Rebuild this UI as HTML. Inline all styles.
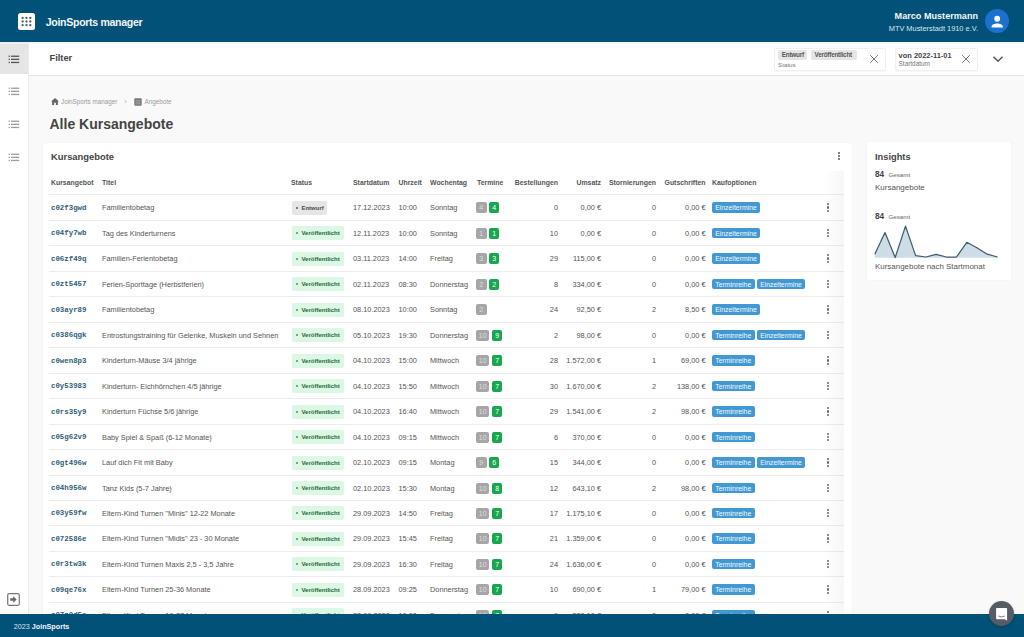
<!DOCTYPE html>
<html lang="de">
<head>
<meta charset="utf-8">
<title>JoinSports manager</title>
<style>
*{box-sizing:border-box;margin:0;padding:0}
html,body{width:1024px;height:637px;overflow:hidden}
body{position:relative;background:#f9f9f9;font-family:"Liberation Sans",sans-serif;color:#555}
.a{position:absolute;white-space:nowrap;line-height:1}
#hdr{position:absolute;left:0;top:0;width:1024px;height:42px;background:#015179}
#logo{position:absolute;left:18px;top:12.5px;width:17px;height:17.5px;background:#fff;border-radius:2.5px}
#logo i{position:absolute;width:2.2px;height:2.2px;border-radius:50%;background:#4a5a66}
#avatar{position:absolute;left:985.2px;top:8.8px;width:24.2px;height:24.2px;border-radius:50%;background:#1b71cd}
#side{position:absolute;left:0;top:42px;width:29px;height:572px;background:#fff;border-right:1px solid #ececec}
#side .act{position:absolute;left:0;top:1.5px;width:28px;height:30.5px;background:#e5e5e5}
#filter{position:absolute;left:29px;top:42px;width:995px;height:34px;background:#fff;box-shadow:inset 0 1.5px 0 #f2f7fa;border-bottom:1px solid #e4e4e4}
.fbox{position:absolute;top:6px;border:1px solid #f0f0f0;border-radius:2px;background:#fff;box-shadow:0 1px 1px rgba(0,0,0,.03)}
.chip{position:absolute;height:10.8px;background:#e6e6e6;border-radius:2px}
#card{position:absolute;left:43px;top:143px;width:809px;height:500px;background:#fff;border-radius:2px;box-shadow:0 0 2px rgba(0,0,0,.06)}
#tbl{position:absolute;left:0;top:0;width:801px;height:500px;overflow:hidden}
.row{position:absolute;left:6px;width:795px;border-bottom:1px solid #ececec}
.row .c,.row .st,.row .tb,.row .kb,.row .keb{position:absolute;top:0;bottom:0;margin:auto 0;white-space:nowrap}
.row>span{}
.c{font-size:7.35px;line-height:25px;height:25px;color:#555}
.row .c{left:auto}
.c.code{font-family:"Liberation Mono",monospace;font-weight:700;font-size:7.4px;color:#2e5d77}
.st{height:14px;line-height:14.2px;font-size:6px;font-weight:700;border-radius:2px;padding-left:9.4px}
.st i{position:absolute;left:3.6px;top:6px;width:2.2px;height:2.2px;border-radius:50%}
.st.ent{width:35.4px;background:#e6e6e6;color:#4a4a4a}
.st.ent i{background:#555}
.st.pub{width:51.8px;background:#dcf7e3;color:#1c6b3a}
.st.pub i{background:#2aa65a}
.tb{height:11px;line-height:11px;font-size:7px;text-align:center;border-radius:2px;color:#fff}
.tb.gray{background:#a6a6a6;color:#dedede}
.tb.green{width:10px;background:#17a74e}
.kb{height:10.5px;line-height:11.3px;font-size:6.9px;text-align:center;border-radius:2px;background:#4198d2;color:#f4f9fc}
.keb{width:2.2px;height:8.8px}
.keb i{position:absolute;left:0;width:2.2px;height:2.2px;background:#6a6a6a;border-radius:50%}
.keb i:nth-child(1){top:0}.keb i:nth-child(2){top:3.3px}.keb i:nth-child(3){top:6.6px}
.th{position:absolute;top:36.8px;font-size:6.9px;font-weight:700;color:#555;line-height:1;white-space:nowrap}
#shade{position:absolute;left:781px;top:28px;width:20px;height:480px;background:linear-gradient(to right,rgba(0,0,0,0),rgba(0,0,0,.035))}
#ins{position:absolute;left:867px;top:142px;width:144px;height:138px;background:#fff;border-radius:2px;box-shadow:0 0 2px rgba(0,0,0,.06)}
#foot{position:absolute;left:0;top:614px;width:1024px;height:23px;background:#015179}
#chat{position:absolute;left:989px;top:601px;width:25px;height:25px;border-radius:50%;background:#565c63;box-shadow:0 1px 3px rgba(0,0,0,.2)}
</style>
</head>
<body>
<div id="hdr">
  <div id="logo"><svg width="17" height="17.5" viewBox="0 0 17 17.5" style="position:absolute;left:0;top:0"><circle cx="4.6" cy="4.9" r="1.15" fill="#4d5b66"/><circle cx="8.5" cy="4.9" r="1.15" fill="#4d5b66"/><circle cx="12.3" cy="4.9" r="1.15" fill="#4d5b66"/><circle cx="4.6" cy="8.5" r="1.15" fill="#4d5b66"/><circle cx="8.5" cy="8.5" r="1.15" fill="#4d5b66"/><circle cx="12.3" cy="8.5" r="1.15" fill="#4d5b66"/><circle cx="4.6" cy="12.2" r="1.15" fill="#4d5b66"/><circle cx="8.5" cy="12.2" r="1.15" fill="#4d5b66"/><circle cx="12.3" cy="12.2" r="1.15" fill="#4d5b66"/></svg></div>
  <div class="a" style="left:45.8px;top:16.7px;font-size:10.6px;letter-spacing:-0.33px;font-weight:700;color:#f2f6f8">JoinSports manager</div>
  <div class="a" style="right:46px;top:11.6px;font-size:9.1px;font-weight:700;color:#f2f6f8">Marco Mustermann</div>
  <div class="a" style="right:46px;top:24.9px;font-size:7.4px;color:#dce6ec">MTV Musterstadt 1910 e.V.</div>
  <div id="avatar">
    <svg width="24.2" height="24.2" viewBox="0 0 24.2 24.2" style="position:absolute;left:0;top:0"><circle cx="12.2" cy="9.7" r="2.95" fill="#fff"/><path d="M6.6 17.6c0-1.9 2.9-3.1 5.6-3.1s5.6 1.2 5.6 3.1v0.8H6.6z" fill="#fff"/></svg>
  </div>
</div>

<div id="side">
  <div style="position:absolute;left:0;top:0;width:29px;height:1.5px;background:#eaf1f6"></div>
  <div class="act"></div>
  <svg width="12" height="9" viewBox="0 0 12 9" style="position:absolute;left:8px;top:12.5px"><rect x="0.6" y="0.6" width="1.3" height="1.3" fill="#555"/><rect x="3" y="0.6" width="8.2" height="1.3" fill="#555"/><rect x="0.6" y="3.6999999999999997" width="1.3" height="1.3" fill="#555"/><rect x="3" y="3.6999999999999997" width="8.2" height="1.3" fill="#555"/><rect x="0.6" y="6.800000000000001" width="1.3" height="1.3" fill="#555"/><rect x="3" y="6.800000000000001" width="8.2" height="1.3" fill="#555"/></svg><svg width="12" height="9" viewBox="0 0 12 9" style="position:absolute;left:8px;top:44.8px"><rect x="0.6" y="0.6" width="1.3" height="1.3" fill="#9d9d9d"/><rect x="3" y="0.6" width="8.2" height="1.3" fill="#9d9d9d"/><rect x="0.6" y="3.6999999999999997" width="1.3" height="1.3" fill="#9d9d9d"/><rect x="3" y="3.6999999999999997" width="8.2" height="1.3" fill="#9d9d9d"/><rect x="0.6" y="6.800000000000001" width="1.3" height="1.3" fill="#9d9d9d"/><rect x="3" y="6.800000000000001" width="8.2" height="1.3" fill="#9d9d9d"/></svg><svg width="12" height="9" viewBox="0 0 12 9" style="position:absolute;left:8px;top:77.8px"><rect x="0.6" y="0.6" width="1.3" height="1.3" fill="#9d9d9d"/><rect x="3" y="0.6" width="8.2" height="1.3" fill="#9d9d9d"/><rect x="0.6" y="3.6999999999999997" width="1.3" height="1.3" fill="#9d9d9d"/><rect x="3" y="3.6999999999999997" width="8.2" height="1.3" fill="#9d9d9d"/><rect x="0.6" y="6.800000000000001" width="1.3" height="1.3" fill="#9d9d9d"/><rect x="3" y="6.800000000000001" width="8.2" height="1.3" fill="#9d9d9d"/></svg><svg width="12" height="9" viewBox="0 0 12 9" style="position:absolute;left:8px;top:110.8px"><rect x="0.6" y="0.6" width="1.3" height="1.3" fill="#9d9d9d"/><rect x="3" y="0.6" width="8.2" height="1.3" fill="#9d9d9d"/><rect x="0.6" y="3.6999999999999997" width="1.3" height="1.3" fill="#9d9d9d"/><rect x="3" y="3.6999999999999997" width="8.2" height="1.3" fill="#9d9d9d"/><rect x="0.6" y="6.800000000000001" width="1.3" height="1.3" fill="#9d9d9d"/><rect x="3" y="6.800000000000001" width="8.2" height="1.3" fill="#9d9d9d"/></svg>
</div>

<div id="filter">
  <div class="a" style="left:20.5px;top:11.9px;font-size:9.3px;font-weight:700;color:#444">Filter</div>
  <div class="fbox" style="left:745px;width:111.5px;height:22.5px">
    <div class="chip" style="left:3.1px;top:0.5px;width:29.4px"></div>
    <div class="chip" style="left:35.7px;top:0.5px;width:46.7px"></div>
    <div class="a" style="left:6.8px;top:2.9px;font-size:6.3px;letter-spacing:-0.2px;font-weight:700;color:#555">Entwurf</div>
    <div class="a" style="left:39.5px;top:2.9px;font-size:6.3px;letter-spacing:-0.2px;font-weight:700;color:#555">Veröffentlicht</div>
    <div class="a" style="left:3.1px;top:12.5px;font-size:6.2px;color:#777">Status</div>
    <svg width="10" height="10" viewBox="0 0 10 10" style="position:absolute;left:93.5px;top:5px"><path d="M1.2 1.2L8.8 8.8M8.8 1.2L1.2 8.8" stroke="#777" stroke-width="1"/></svg>
  </div>
  <div class="fbox" style="left:865.5px;width:83.5px;height:22.5px">
    <div class="a" style="left:3.1px;top:2.7px;font-size:7.45px;font-weight:700;color:#444">von 2022-11-01</div>
    <div class="a" style="left:3.1px;top:11.9px;font-size:6.4px;color:#777">Startdatum</div>
    <svg width="10" height="10" viewBox="0 0 10 10" style="position:absolute;left:65.7px;top:4.7px"><path d="M1.2 1.2L8.8 8.8M8.8 1.2L1.2 8.8" stroke="#777" stroke-width="1"/></svg>
  </div>
  <svg width="12" height="8" viewBox="0 0 12 8" style="position:absolute;left:963px;top:13px"><path d="M1.5 1.8L6 6.2L10.5 1.8" stroke="#555" stroke-width="1.5" fill="none"/></svg>
</div>

<!-- breadcrumb -->
<svg width="8" height="7" viewBox="0 0 8 7" style="position:absolute;left:50.5px;top:98px"><path d="M4 0L8 3.6H6.9V7H4.9V4.8H3.1V7H1.1V3.6H0z" fill="#666"/></svg>
<div class="a" style="left:61px;top:99px;font-size:6.3px;color:#9a9a9a">JoinSports manager</div>
<div class="a" style="left:124.5px;top:99px;font-size:6.3px;color:#aaa">›</div>
<svg width="8" height="8" viewBox="0 0 8 8" style="position:absolute;left:133.8px;top:97.8px"><rect x="0.3" y="0.3" width="7.4" height="7.4" rx="1" fill="#777"/><path d="M1.5 2.6H6.5M1.5 4.2H6.5M1.5 5.8H6.5" stroke="#bbb" stroke-width="0.6"/></svg>
<div class="a" style="left:144.6px;top:99px;font-size:6.3px;color:#9a9a9a">Angebote</div>
<div class="a" style="left:49.5px;top:116.9px;font-size:14px;font-weight:700;color:#444">Alle Kursangebote</div>

<div id="card">
  <div id="tbl">
    <div class="a" style="left:8px;top:9px;font-size:9.4px;font-weight:700;color:#444">Kursangebote</div>
    <div style="position:absolute;left:794.6px;top:8.7px;width:2.3px;height:8.2px"><i style="position:absolute;left:0;top:0;width:2.3px;height:2.3px;border-radius:50%;background:#555"></i><i style="position:absolute;left:0;top:2.95px;width:2.3px;height:2.3px;border-radius:50%;background:#555"></i><i style="position:absolute;left:0;top:5.9px;width:2.3px;height:2.3px;border-radius:50%;background:#555"></i></div>
    <div class="th" style="left:8px">Kursangebot</div>
    <div class="th" style="left:59px">Titel</div>
    <div class="th" style="left:248px">Status</div>
    <div class="th" style="left:310px">Startdatum</div>
    <div class="th" style="left:355.5px">Uhrzeit</div>
    <div class="th" style="left:387px">Wochentag</div>
    <div class="th" style="left:434px">Termine</div>
    <div class="th" style="right:286px">Bestellungen</div>
    <div class="th" style="right:243px">Umsatz</div>
    <div class="th" style="right:188px">Stornierungen</div>
    <div class="th" style="right:138.5px">Gutschriften</div>
    <div class="th" style="left:669px">Kaufoptionen</div>
    <div class="row" style="top:0;height:52px"></div>
<div class="row" style="top:52px;height:26px"><span class="c code" style="left:2px;top:1.6px">c02f3gwd</span><span class="c" style="left:53px">Familientobetag</span><span class="st ent" style="left:243px"><i></i>Entwurf</span><span class="c" style="left:304px">17.12.2023</span><span class="c" style="left:349.5px">10:00</span><span class="c" style="left:381px">Sonntag</span><span class="tb gray" style="left:427px;width:10.5px">4</span><span class="tb green" style="left:440.3px">4</span><span class="c r" style="right:286px">0</span><span class="c r" style="right:243px">0,00 €</span><span class="c r" style="right:188px">0</span><span class="c r" style="right:138.5px">0,00 €</span><span class="kb" style="left:663px;width:48px">Einzeltermine</span><span class="keb" style="left:778px"><i></i><i></i><i></i></span></div>
<div class="row" style="top:78px;height:25px"><span class="c code" style="left:2px;top:1.6px">c04fy7wb</span><span class="c" style="left:53px">Tag des Kinderturnens</span><span class="st pub" style="left:243px"><i></i>Veröffentlicht</span><span class="c" style="left:304px">12.11.2023</span><span class="c" style="left:349.5px">10:00</span><span class="c" style="left:381px">Sonntag</span><span class="tb gray" style="left:427px;width:10.5px">1</span><span class="tb green" style="left:440.3px">1</span><span class="c r" style="right:286px">10</span><span class="c r" style="right:243px">0,00 €</span><span class="c r" style="right:188px">0</span><span class="c r" style="right:138.5px">0,00 €</span><span class="kb" style="left:663px;width:48px">Einzeltermine</span><span class="keb" style="left:778px"><i></i><i></i><i></i></span></div>
<div class="row" style="top:103px;height:26px"><span class="c code" style="left:2px;top:1.6px">c06zf49q</span><span class="c" style="left:53px">Familien-Ferientobetag</span><span class="st pub" style="left:243px"><i></i>Veröffentlicht</span><span class="c" style="left:304px">03.11.2023</span><span class="c" style="left:349.5px">14:00</span><span class="c" style="left:381px">Freitag</span><span class="tb gray" style="left:427px;width:10.5px">3</span><span class="tb green" style="left:440.3px">3</span><span class="c r" style="right:286px">29</span><span class="c r" style="right:243px">115,00 €</span><span class="c r" style="right:188px">0</span><span class="c r" style="right:138.5px">0,00 €</span><span class="kb" style="left:663px;width:48px">Einzeltermine</span><span class="keb" style="left:778px"><i></i><i></i><i></i></span></div>
<div class="row" style="top:129px;height:25px"><span class="c code" style="left:2px;top:1.6px">c0zt5457</span><span class="c" style="left:53px">Ferien-Sporttage (Herbstferien)</span><span class="st pub" style="left:243px"><i></i>Veröffentlicht</span><span class="c" style="left:304px">02.11.2023</span><span class="c" style="left:349.5px">08:30</span><span class="c" style="left:381px">Donnerstag</span><span class="tb gray" style="left:427px;width:10.5px">2</span><span class="tb green" style="left:440.3px">2</span><span class="c r" style="right:286px">8</span><span class="c r" style="right:243px">334,00 €</span><span class="c r" style="right:188px">0</span><span class="c r" style="right:138.5px">0,00 €</span><span class="kb" style="left:663px;width:42.5px">Terminreihe</span><span class="kb" style="left:708.0px;width:48px">Einzeltermine</span><span class="keb" style="left:778px"><i></i><i></i><i></i></span></div>
<div class="row" style="top:154px;height:26px"><span class="c code" style="left:2px;top:1.6px">c03ayr89</span><span class="c" style="left:53px">Familientobetag</span><span class="st pub" style="left:243px"><i></i>Veröffentlicht</span><span class="c" style="left:304px">08.10.2023</span><span class="c" style="left:349.5px">10:00</span><span class="c" style="left:381px">Sonntag</span><span class="tb gray" style="left:427px;width:10.5px">2</span><span class="c r" style="right:286px">24</span><span class="c r" style="right:243px">92,50 €</span><span class="c r" style="right:188px">2</span><span class="c r" style="right:138.5px">8,50 €</span><span class="kb" style="left:663px;width:48px">Einzeltermine</span><span class="keb" style="left:778px"><i></i><i></i><i></i></span></div>
<div class="row" style="top:180px;height:25px"><span class="c code" style="left:2px;top:1.6px">c0386qgk</span><span class="c" style="left:53px">Entrostungstraining für Gelenke, Muskeln und Sehnen</span><span class="st pub" style="left:243px"><i></i>Veröffentlicht</span><span class="c" style="left:304px">05.10.2023</span><span class="c" style="left:349.5px">19:30</span><span class="c" style="left:381px">Donnerstag</span><span class="tb gray" style="left:427px;width:13.4px">10</span><span class="tb green" style="left:443.2px">9</span><span class="c r" style="right:286px">2</span><span class="c r" style="right:243px">98,00 €</span><span class="c r" style="right:188px">0</span><span class="c r" style="right:138.5px">0,00 €</span><span class="kb" style="left:663px;width:42.5px">Terminreihe</span><span class="kb" style="left:708.0px;width:48px">Einzeltermine</span><span class="keb" style="left:778px"><i></i><i></i><i></i></span></div>
<div class="row" style="top:205px;height:26px"><span class="c code" style="left:2px;top:1.6px">c0wen8p3</span><span class="c" style="left:53px">Kinderturn-Mäuse 3/4 jährige</span><span class="st pub" style="left:243px"><i></i>Veröffentlicht</span><span class="c" style="left:304px">04.10.2023</span><span class="c" style="left:349.5px">15:00</span><span class="c" style="left:381px">Mittwoch</span><span class="tb gray" style="left:427px;width:13.4px">10</span><span class="tb green" style="left:443.2px">7</span><span class="c r" style="right:286px">28</span><span class="c r" style="right:243px">1.572,00 €</span><span class="c r" style="right:188px">1</span><span class="c r" style="right:138.5px">69,00 €</span><span class="kb" style="left:663px;width:42.5px">Terminreihe</span><span class="keb" style="left:778px"><i></i><i></i><i></i></span></div>
<div class="row" style="top:231px;height:25px"><span class="c code" style="left:2px;top:1.6px">c0y53983</span><span class="c" style="left:53px">Kinderturn- Eichhörnchen 4/5 jährige</span><span class="st pub" style="left:243px"><i></i>Veröffentlicht</span><span class="c" style="left:304px">04.10.2023</span><span class="c" style="left:349.5px">15:50</span><span class="c" style="left:381px">Mittwoch</span><span class="tb gray" style="left:427px;width:13.4px">10</span><span class="tb green" style="left:443.2px">7</span><span class="c r" style="right:286px">30</span><span class="c r" style="right:243px">1.670,00 €</span><span class="c r" style="right:188px">2</span><span class="c r" style="right:138.5px">138,00 €</span><span class="kb" style="left:663px;width:42.5px">Terminreihe</span><span class="keb" style="left:778px"><i></i><i></i><i></i></span></div>
<div class="row" style="top:256px;height:26px"><span class="c code" style="left:2px;top:1.6px">c0rs35y9</span><span class="c" style="left:53px">Kinderturn Füchse 5/6 jährige</span><span class="st pub" style="left:243px"><i></i>Veröffentlicht</span><span class="c" style="left:304px">04.10.2023</span><span class="c" style="left:349.5px">16:40</span><span class="c" style="left:381px">Mittwoch</span><span class="tb gray" style="left:427px;width:13.4px">10</span><span class="tb green" style="left:443.2px">7</span><span class="c r" style="right:286px">29</span><span class="c r" style="right:243px">1.541,00 €</span><span class="c r" style="right:188px">2</span><span class="c r" style="right:138.5px">98,00 €</span><span class="kb" style="left:663px;width:42.5px">Terminreihe</span><span class="keb" style="left:778px"><i></i><i></i><i></i></span></div>
<div class="row" style="top:282px;height:25px"><span class="c code" style="left:2px;top:1.6px">c05g62v9</span><span class="c" style="left:53px">Baby Spiel &amp; Spaß (6-12 Monate)</span><span class="st pub" style="left:243px"><i></i>Veröffentlicht</span><span class="c" style="left:304px">04.10.2023</span><span class="c" style="left:349.5px">09:15</span><span class="c" style="left:381px">Mittwoch</span><span class="tb gray" style="left:427px;width:13.4px">10</span><span class="tb green" style="left:443.2px">7</span><span class="c r" style="right:286px">6</span><span class="c r" style="right:243px">370,00 €</span><span class="c r" style="right:188px">0</span><span class="c r" style="right:138.5px">0,00 €</span><span class="kb" style="left:663px;width:42.5px">Terminreihe</span><span class="keb" style="left:778px"><i></i><i></i><i></i></span></div>
<div class="row" style="top:307px;height:26px"><span class="c code" style="left:2px;top:1.6px">c0gt496w</span><span class="c" style="left:53px">Lauf dich Fit mit Baby</span><span class="st pub" style="left:243px"><i></i>Veröffentlicht</span><span class="c" style="left:304px">02.10.2023</span><span class="c" style="left:349.5px">09:15</span><span class="c" style="left:381px">Montag</span><span class="tb gray" style="left:427px;width:10.5px">9</span><span class="tb green" style="left:440.3px">6</span><span class="c r" style="right:286px">15</span><span class="c r" style="right:243px">344,00 €</span><span class="c r" style="right:188px">0</span><span class="c r" style="right:138.5px">0,00 €</span><span class="kb" style="left:663px;width:42.5px">Terminreihe</span><span class="kb" style="left:708.0px;width:48px">Einzeltermine</span><span class="keb" style="left:778px"><i></i><i></i><i></i></span></div>
<div class="row" style="top:333px;height:25px"><span class="c code" style="left:2px;top:1.6px">c04h956w</span><span class="c" style="left:53px">Tanz Kids (5-7 Jahre)</span><span class="st pub" style="left:243px"><i></i>Veröffentlicht</span><span class="c" style="left:304px">02.10.2023</span><span class="c" style="left:349.5px">15:30</span><span class="c" style="left:381px">Montag</span><span class="tb gray" style="left:427px;width:13.4px">10</span><span class="tb green" style="left:443.2px">8</span><span class="c r" style="right:286px">12</span><span class="c r" style="right:243px">643,10 €</span><span class="c r" style="right:188px">2</span><span class="c r" style="right:138.5px">98,00 €</span><span class="kb" style="left:663px;width:42.5px">Terminreihe</span><span class="keb" style="left:778px"><i></i><i></i><i></i></span></div>
<div class="row" style="top:358px;height:25px"><span class="c code" style="left:2px;top:1.6px">c03y59fw</span><span class="c" style="left:53px">Eltern-Kind Turnen &quot;Minis&quot; 12-22 Monate</span><span class="st pub" style="left:243px"><i></i>Veröffentlicht</span><span class="c" style="left:304px">29.09.2023</span><span class="c" style="left:349.5px">14:50</span><span class="c" style="left:381px">Freitag</span><span class="tb gray" style="left:427px;width:13.4px">10</span><span class="tb green" style="left:443.2px">7</span><span class="c r" style="right:286px">17</span><span class="c r" style="right:243px">1.175,10 €</span><span class="c r" style="right:188px">0</span><span class="c r" style="right:138.5px">0,00 €</span><span class="kb" style="left:663px;width:42.5px">Terminreihe</span><span class="keb" style="left:778px"><i></i><i></i><i></i></span></div>
<div class="row" style="top:383px;height:26px"><span class="c code" style="left:2px;top:1.6px">c072586e</span><span class="c" style="left:53px">Eltern-Kind Turnen &quot;Midis&quot; 23 - 30 Monate</span><span class="st pub" style="left:243px"><i></i>Veröffentlicht</span><span class="c" style="left:304px">29.09.2023</span><span class="c" style="left:349.5px">15:45</span><span class="c" style="left:381px">Freitag</span><span class="tb gray" style="left:427px;width:13.4px">10</span><span class="tb green" style="left:443.2px">7</span><span class="c r" style="right:286px">21</span><span class="c r" style="right:243px">1.359,00 €</span><span class="c r" style="right:188px">0</span><span class="c r" style="right:138.5px">0,00 €</span><span class="kb" style="left:663px;width:42.5px">Terminreihe</span><span class="keb" style="left:778px"><i></i><i></i><i></i></span></div>
<div class="row" style="top:409px;height:25px"><span class="c code" style="left:2px;top:1.6px">c0r3tw3k</span><span class="c" style="left:53px">Eltern-Kind Turnen Maxis 2,5 - 3,5 Jahre</span><span class="st pub" style="left:243px"><i></i>Veröffentlicht</span><span class="c" style="left:304px">29.09.2023</span><span class="c" style="left:349.5px">16:30</span><span class="c" style="left:381px">Freitag</span><span class="tb gray" style="left:427px;width:13.4px">10</span><span class="tb green" style="left:443.2px">7</span><span class="c r" style="right:286px">24</span><span class="c r" style="right:243px">1.636,00 €</span><span class="c r" style="right:188px">0</span><span class="c r" style="right:138.5px">0,00 €</span><span class="kb" style="left:663px;width:42.5px">Terminreihe</span><span class="keb" style="left:778px"><i></i><i></i><i></i></span></div>
<div class="row" style="top:434px;height:26px"><span class="c code" style="left:2px;top:1.6px">c09qe76x</span><span class="c" style="left:53px">Eltern-Kind Turnen 25-36 Monate</span><span class="st pub" style="left:243px"><i></i>Veröffentlicht</span><span class="c" style="left:304px">28.09.2023</span><span class="c" style="left:349.5px">09:25</span><span class="c" style="left:381px">Donnerstag</span><span class="tb gray" style="left:427px;width:13.4px">10</span><span class="tb green" style="left:443.2px">7</span><span class="c r" style="right:286px">10</span><span class="c r" style="right:243px">690,00 €</span><span class="c r" style="right:188px">1</span><span class="c r" style="right:138.5px">79,00 €</span><span class="kb" style="left:663px;width:42.5px">Terminreihe</span><span class="keb" style="left:778px"><i></i><i></i><i></i></span></div>
<div class="row" style="top:460px;height:25px"><span class="c code" style="left:2px;top:1.6px">c07z0d5e</span><span class="c" style="left:53px">Eltern-Kind Turnen 16-27 Monate</span><span class="st pub" style="left:243px"><i></i>Veröffentlicht</span><span class="c" style="left:304px">28.09.2023</span><span class="c" style="left:349.5px">10:00</span><span class="c" style="left:381px">Donnerstag</span><span class="tb gray" style="left:427px;width:13.4px">10</span><span class="tb green" style="left:443.2px">7</span><span class="c r" style="right:286px">9</span><span class="c r" style="right:243px">580,10 €</span><span class="c r" style="right:188px">0</span><span class="c r" style="right:138.5px">0,00 €</span><span class="kb" style="left:663px;width:42.5px">Terminreihe</span><span class="keb" style="left:778px"><i></i><i></i><i></i></span></div>
    <div id="shade"></div>
  </div>
</div>

<div id="ins">
  <div class="a" style="left:8px;top:11px;font-size:9.3px;font-weight:700;color:#444">Insights</div>
  <div class="a" style="left:8px;top:27.8px;font-size:8.3px;font-weight:700;color:#444">84</div>
  <div class="a" style="left:21.5px;top:29.5px;font-size:6.2px;color:#666">Gesamt</div>
  <div class="a" style="left:8px;top:41.8px;font-size:8px;color:#555">Kursangebote</div>
  <div class="a" style="left:8px;top:70.2px;font-size:8.3px;font-weight:700;color:#444">84</div>
  <div class="a" style="left:21.5px;top:71.9px;font-size:6.2px;color:#666">Gesamt</div>
  <svg width="146" height="138" viewBox="0 0 146 138" style="position:absolute;left:-1px;top:0">
    <path d="M8.8 112.2L19 90.5L29.2 115.5L39.5 84.1L49.6 113.6L59.9 115L70.1 112.3L80.3 115L90.5 115L100.8 100.3L110.9 105.8L121.2 112.2L131.5 115L131.5 115.7L8.8 115.7Z" fill="#cddce5"/>
    <path d="M8.8 112.2L19 90.5L29.2 115.5L39.5 84.1L49.6 113.6L59.9 115L70.1 112.3L80.3 115L90.5 115L100.8 100.3L110.9 105.8L121.2 112.2L131.5 115" fill="none" stroke="#3f5d6f" stroke-width="1.25" stroke-linejoin="round"/>
  </svg>
  <div class="a" style="left:8px;top:121.2px;font-size:7.95px;color:#555">Kursangebote nach Startmonat</div>
</div>

<div id="foot">
  <div class="a" style="left:13.8px;top:8.7px;font-size:7.2px;color:#dce6ec">2023 <b style="color:#f4f7f9">JoinSports</b></div>
</div>
<div id="chat">
  <svg width="25" height="25" viewBox="0 0 25 25" style="position:absolute;left:0;top:0"><path d="M7.8 7.1h9.6a0.7 0.7 0 0 1 .7.7v11.9l-2.3-1.4H7.8a0.7 0.7 0 0 1-.7-.7V7.8a0.7 0.7 0 0 1 .7-.7z" fill="#fff"/><path d="M9.4 15.1q3.2 1.5 6.4 0" stroke="#5a5e64" stroke-width="0.8" fill="none"/></svg>
</div>
<svg width="13" height="13" viewBox="0 0 13 13" style="position:absolute;left:7px;top:592.5px"><rect x="0.7" y="0.7" width="11.6" height="11.6" rx="1.5" fill="none" stroke="#777" stroke-width="1.2"/><path d="M3.3 5.3H6.2V3.3L9.7 6.5L6.2 9.7V7.7H3.3z" fill="#666"/></svg>
</body>
</html>
